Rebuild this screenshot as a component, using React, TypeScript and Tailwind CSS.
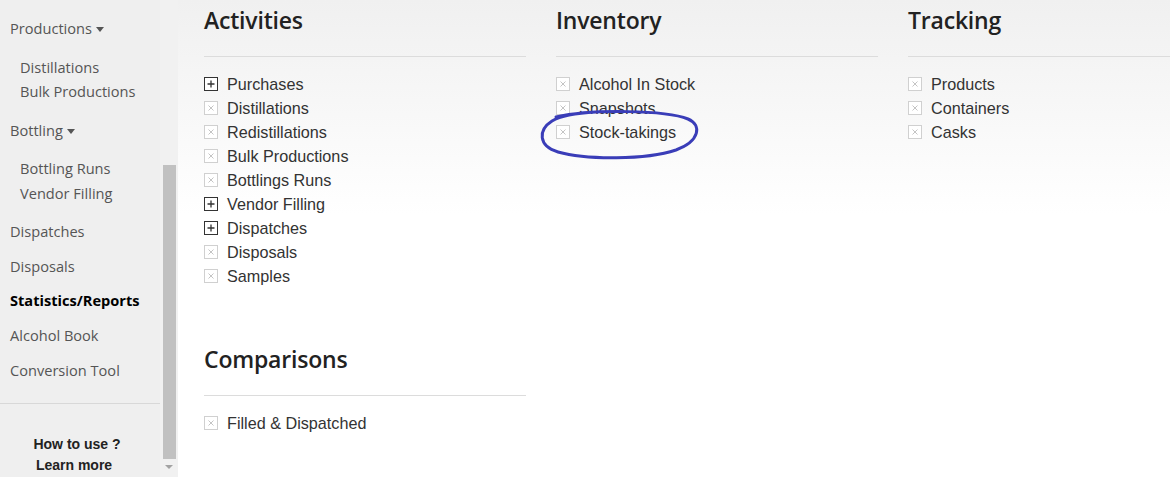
import React from "react";

const PlusIcon = () => (
  <svg width="14" height="14" viewBox="0 0 14 14" className="shrink-0">
    <rect x="0.5" y="0.5" width="13" height="13" fill="#fff" stroke="#333" strokeWidth="1" />
    <path d="M3.5 7h7M7 3.5v7" stroke="#333" strokeWidth="1.3" />
  </svg>
);

const XIcon = () => (
  <svg width="14" height="14" viewBox="0 0 14 14" className="shrink-0">
    <rect x="0.5" y="0.5" width="13" height="13" fill="#fff" stroke="#d0d0d0" strokeWidth="1" />
    <path d="M4.5 4.5l5 5M9.5 4.5l-5 5" stroke="#c4c4c4" strokeWidth="1" />
  </svg>
);

type Item = { label: string; plus?: boolean };

const Section = ({ title, items, className = "" }: { title: string; items: Item[]; className?: string }) => (
  <div className={className}>
    <h2 className="text-[23px] font-semibold leading-[40px] text-[#222] font-['Open_Sans',sans-serif] tracking-[-0.2px]">{title}</h2>
    <div className="mt-[16px] border-t border-[#dcdcdc]" />
    <ul className="mt-[15px]">
      {items.map((it) => (
        <li key={it.label} className="flex items-center gap-[9px] h-[24px] text-[16.2px] text-[#333] font-['Liberation_Sans',Arial,sans-serif]">
          {it.plus ? <PlusIcon /> : <XIcon />}
          <span>{it.label}</span>
        </li>
      ))}
    </ul>
  </div>
);

const Caret = () => (
  <span className="inline-block ml-[4px] align-middle w-0 h-0 border-l-[4px] border-r-[4px] border-t-[5px] border-l-transparent border-r-transparent border-t-[#555] relative top-[-1px]" />
);

export default function App() {
  return (
    <div className="flex w-[1170px] h-[477px] overflow-hidden bg-white">
      {/* Sidebar */}
      <div className="flex h-full shrink-0">
        <div className="w-[160px] h-full bg-[#efefef] flex flex-col font-['Open_Sans',sans-serif] text-[14.6px] text-[#555]">
          <div className="pl-[10px] pt-[16px]">
            <div className="leading-[24px]">Productions<Caret /></div>
            <div className="pl-[10px] mt-[15px] leading-[24px]">
              <div>Distillations</div>
              <div>Bulk Productions</div>
            </div>
            <div className="mt-[15px] leading-[24px]">Bottling<Caret /></div>
            <div className="pl-[10px] mt-[14px] leading-[25px]">
              <div>Bottling Runs</div>
              <div>Vendor Filling</div>
            </div>
            <div className="mt-[13px] leading-[24px]">Dispatches</div>
            <div className="mt-[11px] leading-[24px]">Disposals</div>
            <div className="mt-[10px] leading-[24px] font-bold text-black">Statistics/Reports</div>
            <div className="mt-[11px] leading-[24px]">Alcohol Book</div>
            <div className="mt-[11px] leading-[24px]">Conversion Tool</div>
          </div>
          <div className="mt-[21px] border-t border-[#d8d8d8]" />
          <div className="mt-[30px] flex flex-col items-center pr-[6px] font-['Liberation_Sans',Arial,sans-serif] font-bold text-[14px] text-[#222] leading-[21px]">
            <div>How to use ?</div>
            <div className="pr-[6px]">Learn more</div>
          </div>
        </div>
        {/* scrollbar */}
        <div className="w-[18px] h-full bg-[#f1f1f1] flex flex-col items-center">
          <div className="mt-[165px] w-[13px] h-[294px] bg-[#c1c1c1]" />
          <div className="mt-[6px] w-0 h-0 border-l-[4px] border-r-[4px] border-t-[4px] border-l-transparent border-r-transparent border-t-[#a3a3a3]" />
        </div>
      </div>

      {/* Main */}
      <div className="relative flex-1 h-full bg-gradient-to-b from-[#f0f0f0] to-white to-[45%] pl-[26px]">
        <div className="flex gap-[30px]">
          <div className="w-[322px] flex flex-col">
            <Section
              title="Activities"
              items={[
                { label: "Purchases", plus: true },
                { label: "Distillations" },
                { label: "Redistillations" },
                { label: "Bulk Productions" },
                { label: "Bottlings Runs" },
                { label: "Vendor Filling", plus: true },
                { label: "Dispatches", plus: true },
                { label: "Disposals" },
                { label: "Samples" },
              ]}
            />
            <Section className="mt-[51px]" title="Comparisons" items={[{ label: "Filled & Dispatched" }]} />
          </div>
          <Section
            className="w-[322px]"
            title="Inventory"
            items={[{ label: "Alcohol In Stock" }, { label: "Snapshots" }, { label: "Stock-takings" }]}
          />
          <Section
            className="w-[322px]"
            title="Tracking"
            items={[{ label: "Products" }, { label: "Containers" }, { label: "Casks" }]}
          />
        </div>
        {/* hand-drawn annotation */}
        <svg className="absolute left-[358px] top-[108px] pointer-events-none" width="170" height="56" viewBox="0 0 170 56">
          <path
            d="M20 9 C 55 1, 130 2, 152 11 C 166 17, 164 33, 140 42 C 110 52, 50 52, 22 44 C 2 38, 2 22, 16 13 C 24 8, 40 5, 60 4"
            fill="none"
            stroke="#3a3db8"
            strokeWidth="3"
            strokeLinecap="round"
          />
        </svg>
      </div>
    </div>
  );
}
